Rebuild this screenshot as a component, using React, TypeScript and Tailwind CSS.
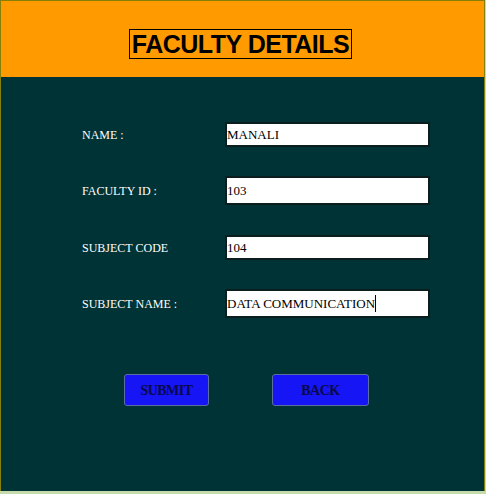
const rows = [
  { label: "NAME :", value: "MANALI", top: "mt-[45px]", h: "h-[25px]" },
  { label: "FACULTY ID :", value: "103", top: "mt-[29px]", h: "h-[29px]" },
  { label: "SUBJECT CODE", value: "104", top: "mt-[30px]", h: "h-[25px]" },
  { label: "SUBJECT NAME :", value: "DATA COMMUNICATION", top: "mt-[29px]", h: "h-[29px]" },
];

const App = () => {
  return (
    <div className="w-[486px] h-[494px] bg-[#c6dbab] overflow-hidden">
      <div className="w-[485px] h-[491px] border-t border-l border-r border-[#86800a] flex flex-col">
        {/* Header */}
        <div className="h-[76px] bg-[#ff9b00] flex items-center justify-center shrink-0">
          <h1 className="mt-[10px] ml-[-4px] border border-black px-[2px] leading-[28px] text-[25px] font-bold text-black font-['Liberation_Sans',sans-serif] tracking-[-0.5px]">
            FACULTY DETAILS
          </h1>
        </div>

        {/* Form */}
        <div className="flex-1 bg-[#003335] font-['Liberation_Serif',serif]">
          {rows.map((r) => (
            <div key={r.label} className={`${r.top} flex items-center pl-[81px]`}>
              <span className="w-[143px] shrink-0 text-[12px] text-white">{r.label}</span>
              <div
                className={`${r.h} w-[205px] shrink-0 bg-white border-2 border-[#0b1d1d] flex items-center text-[13px] text-black leading-none`}
              >
                <span>{r.value}</span>
                {r.value === "DATA COMMUNICATION" && (
                  <span className="w-px h-[17px] bg-black" />
                )}
              </div>
            </div>
          ))}

          {/* Buttons */}
          <div className="mt-[56px] flex pl-[123px] gap-[63px]">
            <button className="w-[85px] h-[32px] bg-[#1515f5] border border-[#5c6ea0] rounded-[3px] text-[14px] font-bold text-[#0a0a48] font-['Liberation_Serif',serif] tracking-[-0.5px]">
              SUBMIT
            </button>
            <button className="w-[97px] h-[32px] bg-[#1515f5] border border-[#5c6ea0] rounded-[3px] text-[14px] font-bold text-[#0a0a48] font-['Liberation_Serif',serif] tracking-[-0.5px]">
              BACK
            </button>
          </div>
        </div>
      </div>
    </div>
  );
};

export default App;
